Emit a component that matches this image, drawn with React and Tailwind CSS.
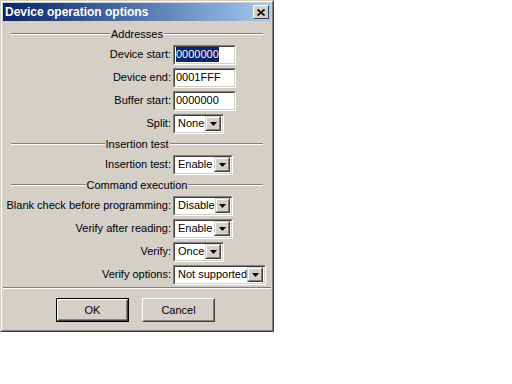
import React from 'react';

const font = { fontFamily: '"Liberation Sans", Arial, sans-serif' };

const Sunken = ({ children, className = '' }) => (
  <div className={`border border-t-[#808080] border-l-[#808080] border-b-white border-r-white ${className}`}>
    <div className="h-full border border-t-[#404040] border-l-[#404040] border-b-[#d4d0c8] border-r-[#d4d0c8] bg-white">
      {children}
    </div>
  </div>
);

const Arrow = () => (
  <div className="w-[16px] h-[15px] bg-[#d4d0c8] border border-t-[#d4d0c8] border-l-[#d4d0c8] border-b-[#404040] border-r-[#404040]">
    <div className="w-full h-full border border-t-white border-l-white border-b-[#808080] border-r-[#808080] flex items-center justify-center">
      <svg width="7" height="4" viewBox="0 0 7 4"><path d="M0 0h7L3.5 4z" fill="#000" /></svg>
    </div>
  </div>
);

const TextBox = ({ value, selected }) => (
  <Sunken className="w-[63px] h-[20px]">
    <div className="h-full flex items-center pl-[1px] text-[11px] text-black leading-none">
      <span className={selected ? 'bg-[#0a246a] text-white py-[2px]' : ''}>{value}</span>
    </div>
  </Sunken>
);

const Select = ({ value, width }) => (
  <Sunken className={`h-[20px] ${width}`}>
    <div className="h-full flex items-center justify-between pr-[1px]">
      <span className="pl-[3px] text-[11px] leading-none whitespace-nowrap">{value}</span>
      <Arrow />
    </div>
  </Sunken>
);

const Row = ({ label, children }) => (
  <div className="flex items-center h-[23px]">
    <div className="w-[170px] text-right pr-[2px] text-[11px] text-black whitespace-nowrap">{label}</div>
    {children}
  </div>
);

const Section = ({ title }) => (
  <div className="flex items-center h-[18px] px-[8px] gap-[1px]">
    <div className="flex-1 h-[2px] border-t border-t-[#808080] border-b border-b-white" />
    <span className="text-[11px] text-black leading-none">{title}</span>
    <div className="flex-1 h-[2px] border-t border-t-[#808080] border-b border-b-white" />
  </div>
);

const Button = ({ children, def }) => (
  <div className={`w-[73px] h-[24px] ${def ? 'border border-black' : ''}`}>
    <div className="h-full bg-[#d4d0c8] border border-t-white border-l-white border-b-[#404040] border-r-[#404040]">
      <div className="h-full border border-t-[#d4d0c8] border-l-[#d4d0c8] border-b-[#808080] border-r-[#808080] flex items-center justify-center text-[11px]">
        {children}
      </div>
    </div>
  </div>
);

export default function App() {
  return (
    <div className="w-[512px] h-[384px] bg-white" style={font}>
      <div className="w-[274px] h-[332px] border border-t-[#d4d0c8] border-l-[#d4d0c8] border-b-[#404040] border-r-[#404040]">
        <div className="h-full bg-[#d4d0c8] border border-t-white border-l-white border-b-[#808080] border-r-[#808080] p-[1px] flex flex-col">
          <div className="h-[18px] flex items-center justify-between pl-[2px] pr-[2px] bg-gradient-to-r from-[#0a246a] to-[#a6caf0]">
            <span className="text-white font-bold text-[12px] leading-none">Device operation options</span>
            <div className="w-[16px] h-[14px] bg-[#d4d0c8] border border-t-white border-l-white border-b-[#404040] border-r-[#404040] flex items-center justify-center">
              <svg width="8" height="7" viewBox="0 0 8 7"><path d="M0.5 0.5l7 6M7.5 0.5l-7 6" stroke="#000" strokeWidth="1.6" /></svg>
            </div>
          </div>
          <div className="pt-[4px] flex flex-col">
            <Section title="Addresses" />
            <Row label="Device start:"><TextBox value="0000000" selected /></Row>
            <Row label="Device end:"><TextBox value="0001FFF" /></Row>
            <Row label="Buffer start:"><TextBox value="0000000" /></Row>
            <Row label="Split:"><Select value="None" width="w-[51px]" /></Row>
            <Section title="Insertion test" />
            <Row label="Insertion test:"><Select value="Enable" width="w-[60px]" /></Row>
            <Section title="Command execution" />
            <Row label="Blank check before programming:"><Select value="Disable" width="w-[60px]" /></Row>
            <Row label="Verify after reading:"><Select value="Enable" width="w-[60px]" /></Row>
            <Row label="Verify:"><Select value="Once" width="w-[51px]" /></Row>
            <Row label="Verify options:"><Select value="Not supported" width="w-[93px]" /></Row>
          </div>
          <div className="mt-[1px] h-[2px] border-t border-t-[#808080] border-b border-b-white" />
          <div className="flex gap-[13px] pl-[53px] pt-[9px]">
            <Button def>OK</Button>
            <Button>Cancel</Button>
          </div>
        </div>
      </div>
    </div>
  );
}
